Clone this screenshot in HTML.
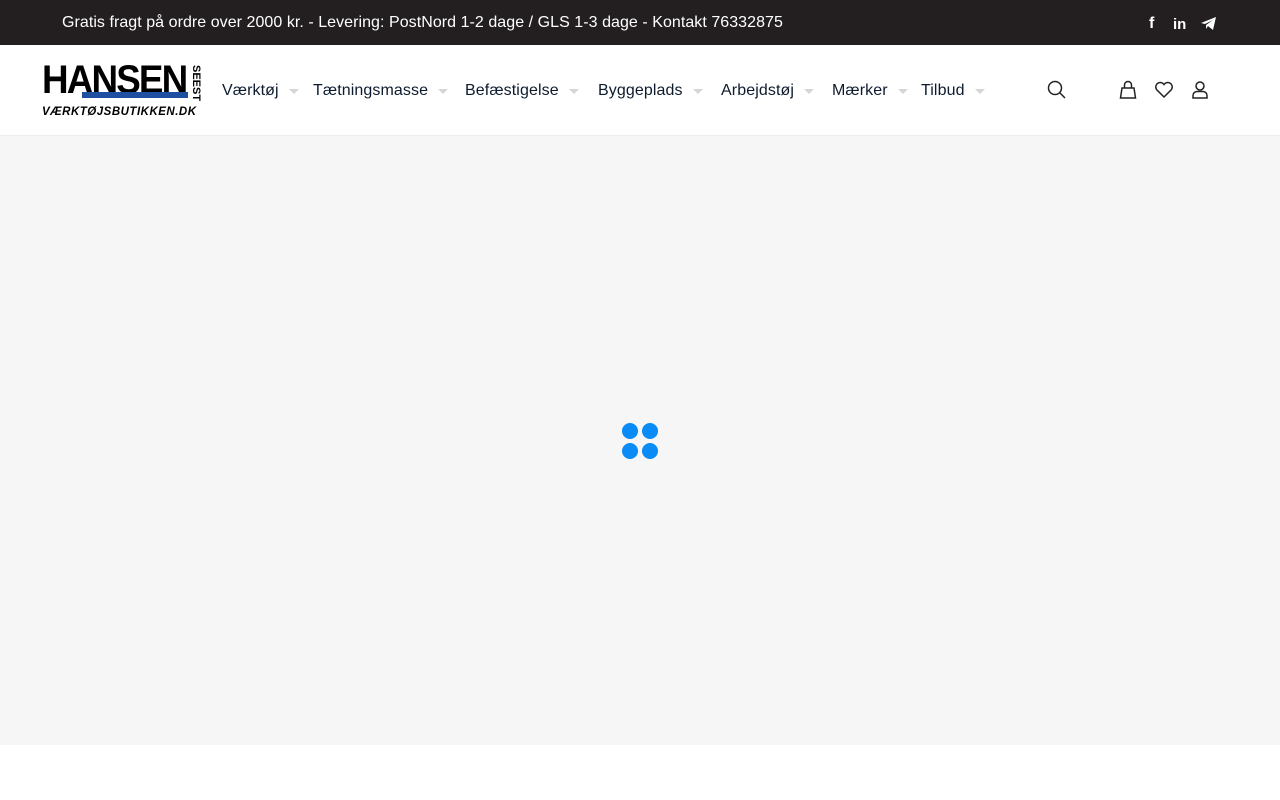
<!DOCTYPE html>
<html><head><meta charset="utf-8"><style>
*{margin:0;padding:0;box-sizing:border-box}
body{width:1280px;height:800px;background:#fff;font-family:"Liberation Sans",sans-serif;overflow:hidden;position:relative}
.top{position:absolute;left:0;top:0;width:1280px;height:45px;background:#231f20;color:#fff;font-size:16px}
.top .t{position:absolute;left:62px;top:14px;letter-spacing:0.05px}
.hdr{position:absolute;left:0;top:45px;width:1280px;height:91px;background:#fff;border-bottom:1px solid #ececec}
.nav span{position:absolute;top:37px;display:flex;align-items:center;font-size:16px;color:#0d1b2e;letter-spacing:0.1px}
.nav span:after{content:"";border-left:5px solid transparent;border-right:5px solid transparent;border-top:5px solid #d6d6d6;margin-left:10px}
.main{position:absolute;left:0;top:136px;width:1280px;height:609px;background:#f6f6f6}
.d{position:absolute;width:16px;height:16px;border-radius:50%;background:#0a8bf5}
svg.i{position:absolute}
</style></head><body>
<div class="top"><div class="t">Gratis fragt på ordre over 2000 kr. - Levering: PostNord 1-2 dage / GLS 1-3 dage - Kontakt 76332875</div>
<div style="position:absolute;left:1149px;top:15px;font-weight:bold;font-size:16px">f</div>
<div style="position:absolute;left:1173px;top:16px;font-weight:bold;font-size:15px">in</div>
<svg class="i" style="left:1201px;top:17px" width="15" height="13" viewBox="0 0 15 13"><path d="M0 6L15 0L12 13L7 9L5 12L5 8L12 3L4 7Z" fill="#fff"/></svg>
</div>
<div class="hdr">
<div style="position:absolute;left:42px;top:18px;width:150px;height:34px">
<div style="position:absolute;left:0;top:-3px;font:900 40px/40px 'Liberation Sans',sans-serif;letter-spacing:-2px;color:#000;transform:scaleX(0.92);transform-origin:left">HANSEN</div>
<div style="position:absolute;left:40px;top:29px;width:106px;height:6px;background:#1f4fa0"></div>
</div>
<div style="position:absolute;left:190px;top:20px;font:bold 11px 'Liberation Sans';writing-mode:vertical-rl">SEEST</div>
<div style="position:absolute;left:42px;top:61px;font:italic 900 11.5px 'Liberation Sans';letter-spacing:0.5px">VÆRKTØJSBUTIKKEN.DK</div>
<div class="nav"><span style="left:222px">Værktøj</span><span style="left:313px">Tætningsmasse</span><span style="left:465px">Befæstigelse</span><span style="left:598px">Byggeplads</span><span style="left:721px">Arbejdstøj</span><span style="left:832px">Mærker</span><span style="left:921px">Tilbud</span></div>
<svg class="i" style="left:1047px;top:35px" width="20" height="20" viewBox="0 0 20 20" fill="none" stroke="#222" stroke-width="1.5"><circle cx="8" cy="8" r="6.5"/><path d="M13 13L18 18"/></svg>
<svg class="i" style="left:1119px;top:35px" width="18" height="20" viewBox="0 0 18 20" fill="none" stroke="#222" stroke-width="1.5"><path d="M1.5 18H16.5L15 8H3Z"/><path d="M5.5 8V5a3.5 3.5 0 0 1 7 0V8"/></svg>
<svg class="i" style="left:1154px;top:35px" width="20" height="20" viewBox="0 0 20 20" fill="none" stroke="#222" stroke-width="1.5"><path d="M10 17L2.5 9.5A4 4 0 0 1 10 4.5A4 4 0 0 1 17.5 9.5Z"/></svg>
<svg class="i" style="left:1191px;top:35px" width="18" height="20" viewBox="0 0 18 20" fill="none" stroke="#222" stroke-width="1.5"><circle cx="9" cy="6" r="4"/><path d="M2 18V15.5a4 4 0 0 1 4-4H12a4 4 0 0 1 4 4V18Z"/></svg>
</div>
<div class="main">
<div class="d" style="left:622px;top:287px"></div><div class="d" style="left:642px;top:287px"></div>
<div class="d" style="left:622px;top:307px"></div><div class="d" style="left:642px;top:307px"></div>
</div>
</body></html>
